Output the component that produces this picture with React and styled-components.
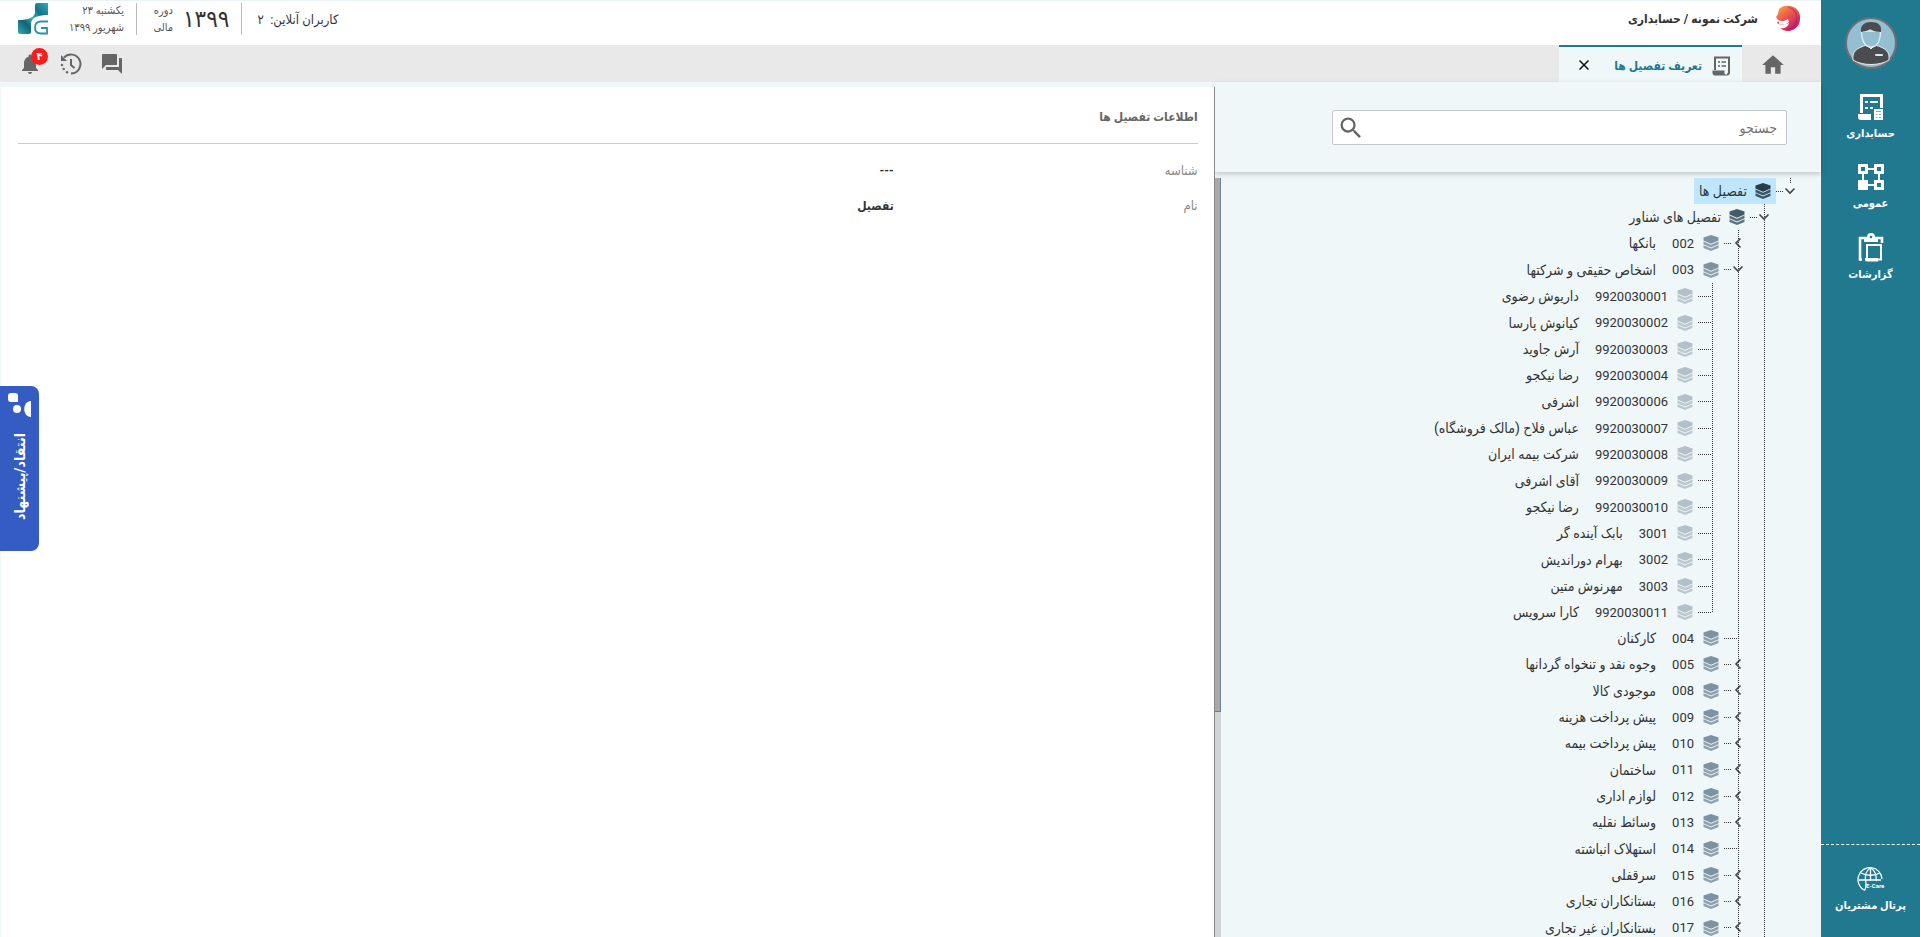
import React, { useState } from 'react'
import styled, { createGlobalStyle, css } from 'styled-components'
import { MdHome, MdForum, MdNotifications, MdSearch } from 'react-icons/md'

const teal = '#217990'
const pale = '#f0f7f9'

const GlobalStyle = createGlobalStyle`
* {
  box-sizing: border-box;
}
body {
  margin: 0;
  background: ${pale};
  color: #333;
  font-family: Roboto, "DejaVu Sans Condensed", "DejaVu Sans", sans-serif;
  font-size: 13px;
}
button, input {
  font: inherit;
  color: inherit;
}
button {
  padding: 0;
  border: 0;
  background: none;
  cursor: pointer;
}
`

const Page = styled.div`
direction: rtl;
display: flex;
height: 100vh;
overflow: hidden;
`

const Sidebar = styled.nav`
flex: 0 0 99px;
display: flex;
flex-direction: column;
align-items: center;
padding-top: 17px;
background: ${teal};
color: white;
`

const Avatar = styled.button`
height: 52px;
margin-bottom: 24px;
`

const SideLink = styled.a`
display: flex;
flex-direction: column;
align-items: center;
gap: 3px;
height: 70px;
color: white;
font-size: 11px;
font-weight: bold;
line-height: 20px;
text-decoration: none;
white-space: nowrap;
`

const Portal = styled.div`
align-self: stretch;
margin-top: auto;
padding-top: 22px;
border-top: 1px dashed white;
`

const Main = styled.div`
flex: 1;
min-width: 0;
display: flex;
flex-direction: column;
`

const Header = styled.header`
display: flex;
justify-content: space-between;
height: 45px;
border-top: 1px solid #eaf4f6;
background: white;
`

const HeaderGroup = styled.div`
display: flex;
align-items: center;
padding: 0 20px 8px 18px;
`

const Company = styled.h1`
margin: 0 18px 0 0;
font-size: 12px;
font-weight: bold;
`

const OnlineUsers = styled.span`
padding-left: 15px;
`

const Separated = styled.div`
display: flex;
align-items: center;
gap: 10px;
height: 32px;
padding: 0 12px 0 14px;
border-right: 1px solid #bbb;
`

const Year = styled.span`
font-size: 24px;
line-height: 32px;
`

const Small = styled.span`
width: ${props => props.$width};
color: #555;
font-size: 11px;
line-height: 17px;
`

const TabBar = styled.div`
display: flex;
justify-content: space-between;
height: 37px;
padding-left: 18px;
background: #e9e9e9;
color: #666;
`

const Tabs = styled.div`
display: flex;
align-items: stretch;
`

const HomeTab = styled.button`
width: 79px;
padding: 2px 0 0 18px;
color: #666;
display: flex;
align-items: center;
justify-content: flex-end;
`

const Tab = styled.div`
display: flex;
align-items: center;
width: 183px;
padding: 2px 11px 0;
border-top: 2px solid ${teal};
background: ${pale};
`

const TabTitle = styled.a`
flex: 1;
display: flex;
align-items: center;
gap: 10px;
color: ${teal};
font-size: 12px;
font-weight: bold;
text-decoration: none;
white-space: nowrap;
`

const CloseButton = styled.button`
width: 28px;
height: 28px;
`

const Tools = styled.div`
display: flex;
align-items: center;
gap: 18px;
`

const ToolButton = styled.button`
position: relative;
display: flex;
color: #666;
`

const Badge = styled.span`
position: absolute;
top: -4px;
left: 13px;
width: 17px;
height: 17px;
border-radius: 50%;
background: #f91c1c;
color: white;
font-size: 11px;
font-weight: bold;
line-height: 17px;
text-align: center;
`

const Content = styled.main`
flex: 1;
min-height: 0;
display: flex;
`

const TreePanel = styled.section`
flex: 0 0 33.3%;
min-width: 0;
display: flex;
flex-direction: column;
`

const SearchArea = styled.form`
padding: 28px 34px 27px 117px;
box-shadow: 0 2px 5px rgba(0, 0, 0, .2);
`

const SearchBox = styled.div`
display: flex;
align-items: center;
height: 35px;
border: 1px solid #c4c8ca;
border-radius: 2px;
background: white;
color: #666;
`

const SearchInput = styled.input`
flex: 1;
min-width: 0;
height: 100%;
padding: 0 9px;
border: 0;
outline: 0;
background: none;
font-size: 14px;
::placeholder {
  color: #777;
}
`

const SearchButton = styled.button`
display: flex;
margin-left: 4px;
`

const TreeScroll = styled.div`
flex: 1;
min-height: 0;
display: flex;
margin-top: 6px;
overflow: hidden;
`

const Track = styled.div`
flex: 0 0 6px;
background: #cfd4d6;
`

const Thumb = styled.div`
height: 70.4%;
border-right: 1px solid #6f8195;
border-bottom: 1px solid #6f8195;
background: #a9a9a9;
`

const dots = direction => css`repeating-linear-gradient(${direction}, #333 0 1px, transparent 1px 2px)`

const Branch = styled.ul`
margin: 0 26px 0 0;
padding: 0;
list-style: none;
background: ${dots('to bottom')} right top / 1px calc(100% - 12px) no-repeat;
`

const RootBranch = styled(Branch)`
flex: 1;
margin-right: 30px;
background-size: 1px 6px;
`

const Node = styled.li`
&:nth-child(3n + 2) > div {
  height: 27px;
}
`

const Row = styled.div`
position: relative;
display: flex;
align-items: center;
height: 26px;
`

const Stub = styled.span`
flex: none;
width: 15px;
height: 1px;
background: ${dots('to right')} left top / ${props => (props.$short ? '8px' : '14px')} 1px no-repeat;
`

const Toggle = styled.button`
position: absolute;
top: 7px;
right: -5px;
width: 12px;
height: 12px;
display: flex;
`

const Label = styled.button`
display: flex;
align-items: center;
height: 100%;
padding: 0 5px;
background: ${props => (props.$selected ? '#bfe6ff' : 'none')};
white-space: nowrap;
`

const Code = styled.span`
margin-right: 9px;
margin-left: 8px;
`

const Name = styled.span`
margin-right: 8px;
font-size: 14px;
line-height: 20px;
`

const Details = styled.section`
flex: 1;
min-width: 0;
margin: 5px 0 0 1px;
padding: 18px 16px 16px 17px;
border-right: 1px solid #888;
background: white;
`

const DetailsTitle = styled.h2`
margin: 0 0 17px;
padding-bottom: 14px;
border-bottom: 1px solid #ccc;
color: #666;
font-size: 12px;
line-height: 24px;
`

const Fields = styled.dl`
display: grid;
grid-template-columns: 1fr 3fr;
gap: 15px 12px;
margin: 0;
line-height: 20px;
`

const FieldName = styled.dt`
color: #888;
`

const FieldValue = styled.dd`
margin: 0;
font-size: 12px;
font-weight: bold;
`

const Feedback = styled.button`
position: fixed;
top: 386px;
left: 0;
display: flex;
flex-direction: column;
align-items: center;
gap: 16px;
width: 39px;
height: 165px;
padding-top: 6px;
border-radius: 0 8px 8px 0;
background: #355cc2;
color: white;
font-size: 14px;
font-weight: bold;
`

const FeedbackText = styled.span`
writing-mode: vertical-rl;
transform: rotate(180deg);
white-space: nowrap;
`

const LayersIcon = ({ color }) => (
  <svg width="16" height="16" viewBox="0 0 16 16" fill={color}>
    <path d="M8 0l7.500 2.600v2.800L8 8.800.5 5.400V2.600z" />
    <path d="M.5 6.300L3 7.500 8 9.800l5-2.300 2.500-1.200v2.900l-1.500.8L8 12.600 2 10 .5 9.200z" opacity=".85" />
    <path d="M.5 10.300L3 11.300 8 13.500l5-2.200 2.500-1v2.600L8 16 .5 12.900z" opacity=".85" />
  </svg>
)

const Chevron = ({ open }) => (
  <svg width="12" height="12" viewBox="0 0 12 12" fill="none" stroke="#444" strokeWidth="1.600">
    <path d={open ? 'M1.500 3.500L6 8l4.500-4.500' : 'M8.500 1.500L4 6l4.500 4.500'} />
  </svg>
)

const ScrollIcon = () => (
  <svg width="19" height="20" viewBox="0 0 19 20" fill="none" stroke="#666" strokeWidth="2">
    <path d="M3 14V1.500h14V16c0 1.500-1 2.500-2 2.500" />
    <path d="M6 6h2M9.500 6H14M6 10h2M9.500 10H14" strokeWidth="1.600" />
    <path d="M.5 14.500h12V17c0 1 .8 1.500 2.500 1.500v1H3c-1.500 0-2.500-1-2.500-2.500z" fill="#666" stroke="none" />
  </svg>
)

const HistoryIcon = () => (
  <svg width="22" height="22" viewBox="0 0 22 22" fill="none" stroke="#666" strokeWidth="2">
    <path d="M4 4.500A9.500 9.500 0 1 1 11 20.500" />
    <path d="M1 2v6h6z" fill="#666" stroke="none" />
    <path d="M11 6v6l3.500 3" />
    <g fill="#666" stroke="none">
      <circle cx="2" cy="12" r="1.200" />
      <circle cx="3.700" cy="16" r="1.200" />
      <circle cx="7" cy="19.200" r="1.200" />
    </g>
  </svg>
)

const AccountingIcon = () => (
  <svg width="26" height="28" viewBox="0 0 26 28">
    <path d="M3.500 20V2.500h20V15" fill="none" stroke="white" strokeWidth="3" />
    <path d="M7 9h3M12 9h8M7 15h3M12 15h3" stroke="white" strokeWidth="2" />
    <path d="M0 21h13v6H3c-2 0-3-1-3-3z" fill="white" />
    <path d="M16 16h9v11h-9z" fill="white" />
    <path d="M18 18.500h5M18 21.500h1.500M21 21.500h2M18 24.500h1.500M21 24.500h2" stroke={teal} opacity=".6" />
  </svg>
)

const GeneralIcon = () => (
  <svg width="28" height="28" viewBox="0 0 28 28" fill="none" stroke="white" strokeWidth="3">
    <path d="M2.500 2.500h7v7h-7zM18.500 2.500h7v7h-7zM18.500 18.500h7v7h-7z" />
    <path d="M1 17h10v10H1z" fill="white" stroke="none" />
    <path d="M11 6h6M6 11v6M22 11v6M11 22h6" strokeWidth="2" />
  </svg>
)

const ReportsIcon = () => (
  <svg width="26" height="29" viewBox="0 0 26 29" fill="none" stroke="white">
    <path d="M4 26.500H2V5h22v5" strokeWidth="2.600" />
    <path d="M6 4h3a4 4 0 0 1 8 0h3v5H6z" fill="white" stroke="none" />
    <circle cx="13" cy="4" r="1.300" fill={teal} stroke="none" />
    <path d="M9 12h14v14.500H9z" strokeWidth="2" />
    <path d="M7 25h13v3.500H9c-1.500 0-2-1-2-2z" fill="white" stroke="none" />
  </svg>
)

const GlobeIcon = () => (
  <svg width="28" height="26" viewBox="0 0 28 26" fill="none" stroke="white" strokeWidth="1.300">
    <path d="M8 23.500A12 12 0 1 1 25 12" />
    <path d="M9 16C7 8 10 3 13.500 1M13.500 1v13M13.500 1C18 3 20 9 19 14M4 6c5 3 14 3 19 0M2 13h22M9 16c0 3 0 5-1 7" />
    <text x="9" y="21" direction="ltr" fill="white" stroke="none" fontSize="6" fontWeight="bold">E-Care</text>
  </svg>
)

const AvatarIcon = () => (
  <svg width="52" height="52" viewBox="0 0 52 52">
    <circle cx="26" cy="26" r="25" fill="#93bfd0" stroke="#6c6f73" strokeWidth="2" />
    <path d="M8 43c-1-8 3-12 14-15l4 4 4-4c11 3 15 7 14 15-9 6-27 6-36 0z" fill="#4b4c50" stroke="#e2eef2" />
    <path d="M16.500 14c0 9 3 16 9.500 16s9.500-7 9.500-16z" fill="#93bfd0" stroke="#e2eef2" strokeWidth="1.300" />
    <path d="M16 15c-1-7 4-10 10-10 7 0 11 3 10 10-5 0-8-1-11-3-2 2-6 2-9 3z" fill="#4b4c50" />
    <rect x="30" y="37" width="8" height="2" rx="1" fill="#dce9ed" />
  </svg>
)

const LionLogo = () => (
  <svg width="25" height="28" viewBox="0 0 25 28">
    <defs>
      <linearGradient id="lion" x1="0" y1="0" x2=".7" y2="1">
        <stop offset="0" stopColor="#fbb040" />
        <stop offset=".45" stopColor="#ef5b4c" />
        <stop offset="1" stopColor="#c4186c" />
      </linearGradient>
    </defs>
    <path d="M3 4C6 1 10 0 14 1c7 1 11 7 10 14-1 8-8 13-17 10l-3-2c4 1 8-1 9-5l-5 2-6-1-1-2 4-1-3-1-2-3 2-3z" fill="url(#lion)" />
    <path d="M12 2c7 2 10 8 8 14-1 5-5 8-9 9" fill="none" stroke="#9e1560" strokeWidth="1.500" opacity=".4" />
    <path d="M3 16h5l4-2 1 3-4 3-6-1z" fill="white" />
  </svg>
)

const BrandLogo = () => (
  <svg width="30" height="32" viewBox="0 0 30 32">
    <defs>
      <linearGradient id="brand" x1="0" y1="1" x2="1" y2="0">
        <stop offset="0" stopColor="#37a9b8" />
        <stop offset=".3" stopColor="#0e6475" />
        <stop offset=".5" stopColor="#37b4c4" />
        <stop offset=".7" stopColor="#11738a" />
        <stop offset="1" stopColor="#37a9b8" />
      </linearGradient>
    </defs>
    <path d="M19 0h11v12c-9 0-16 2-17 8v9c0 1-1 2-2 2H2c-1 0-2-1-2-2V17c8 0 15-1 17-7V2c0-1 1-2 2-2z" fill="url(#brand)" />
    <path d="M30 18.500h-7c-4 0-6 2-6 6s2 6 6 6h6V25h-6" fill="none" stroke="#2793a6" strokeWidth="1.800" />
  </svg>
)

const FeedbackIcon = () => (
  <svg width="24" height="25" viewBox="0 0 24 25" fill="white">
    <path d="M3 1h4c2 0 3 1 3 3v6H3c-2 0-3-1-3-3V4c0-2 1-3 3-3z" />
    <circle cx="9" cy="17" r="4" />
    <path d="M23 9v16c-9 0-9-16 0-16z" />
  </svg>
)

const people = [
  ['9920030001', 'داریوش رضوی'],
  ['9920030002', 'کیانوش پارسا'],
  ['9920030003', 'آرش جاوید'],
  ['9920030004', 'رضا نیکجو'],
  ['9920030006', 'اشرفی'],
  ['9920030007', 'عباس فلاح (مالک فروشگاه)'],
  ['9920030008', 'شرکت بیمه ایران'],
  ['9920030009', 'آقای اشرفی'],
  ['9920030010', 'رضا نیکجو'],
  ['3001', 'بابک آینده گر'],
  ['3002', 'بهرام دوراندیش'],
  ['3003', 'مهرنوش متین'],
  ['9920030011', 'کارا سرویس']
].map(([code, name]) => ({ code, name }))

const groups = [
  { code: '002', name: 'بانکها', children: [] },
  { code: '003', name: 'اشخاص حقیقی و شرکتها', open: true, children: people },
  { code: '004', name: 'کارکنان' },
  { code: '005', name: 'وجوه نقد و تنخواه گردانها', children: [] },
  { code: '008', name: 'موجودی کالا', children: [] },
  { code: '009', name: 'پیش پرداخت هزینه', children: [] },
  { code: '010', name: 'پیش پرداخت بیمه', children: [] },
  { code: '011', name: 'ساختمان', children: [] },
  { code: '012', name: 'لوازم اداری', children: [] },
  { code: '013', name: 'وسائط نقلیه', children: [] },
  { code: '014', name: 'استهلاک انباشته' },
  { code: '015', name: 'سرقفلی', children: [] },
  { code: '016', name: 'بستانکاران تجاری', children: [] },
  { code: '017', name: 'بستانکاران غیر تجاری', children: [] }
]

const tree = {
  name: 'تفصیل ها',
  open: true,
  children: [
    { name: 'تفصیل های شناور', open: true, children: groups }
  ]
}

const iconColors = ['#263c48', '#435c6a', '#7b93a2', '#b3c0c9']

const TreeNode = ({ node, level, selected, onSelect }) => {
  const [open, setOpen] = useState(Boolean(node.open))
  const hasChildren = Boolean(node.children)
  return (
    <Node>
      <Row>
        <Stub $short={hasChildren} />
        {hasChildren && (
          <Toggle aria-label={node.name} aria-expanded={open} onClick={() => setOpen(!open)}>
            <Chevron open={open} />
          </Toggle>
        )}
        <Label $selected={selected === node} onClick={() => onSelect(node)}>
          <LayersIcon color={iconColors[level]} />
          {node.code && <Code>{node.code}</Code>}
          <Name>{node.name}</Name>
        </Label>
      </Row>
      {open && hasChildren && (
        <Branch as={level < 2 ? OpenBranch : undefined}>
          {node.children.map(child => (
            <TreeNode
              key={child.code || child.name}
              node={child}
              level={level + 1}
              selected={selected}
              onSelect={onSelect}
            />
          ))}
        </Branch>
      )}
    </Node>
  )
}

// outer branches keep their guide line running past the last loaded row
const OpenBranch = styled(Branch)`
background-size: 1px 100%;
`

export default function App() {
  const [selected, setSelected] = useState(tree)
  return (
    <Page>
      <GlobalStyle />
      <Sidebar>
        <Avatar aria-label="کاربر"><AvatarIcon /></Avatar>
        <SideLink href="#accounting"><AccountingIcon />حسابداری</SideLink>
        <SideLink href="#general"><GeneralIcon />عمومی</SideLink>
        <SideLink href="#reports"><ReportsIcon />گزارشات</SideLink>
        <Portal>
          <SideLink href="#portal"><GlobeIcon />پرتال مشتریان</SideLink>
        </Portal>
      </Sidebar>
      <Main>
        <Header>
          <HeaderGroup>
            <LionLogo />
            <Company>شرکت نمونه / حسابداری</Company>
          </HeaderGroup>
          <HeaderGroup>
            <OnlineUsers>کاربران آنلاین: &nbsp;۲</OnlineUsers>
            <Separated>
              <Year>۱۳۹۹</Year>
              <Small $width="22px">دوره مالی</Small>
            </Separated>
            <Separated>
              <Small $width="62px">یکشنبه ۲۳ شهریور ۱۳۹۹</Small>
            </Separated>
            <BrandLogo />
          </HeaderGroup>
        </Header>
        <TabBar>
          <Tabs>
            <HomeTab aria-label="خانه"><MdHome size={26} /></HomeTab>
            <Tab>
              <TabTitle href="#details"><ScrollIcon />تعریف تفصیل ها</TabTitle>
              <CloseButton aria-label="بستن">
                <svg width="10" height="10" viewBox="0 0 10 10" stroke="#111" strokeWidth="1.500">
                  <path d="M.5.5l9 9M9.500.5l-9 9" />
                </svg>
              </CloseButton>
            </Tab>
          </Tabs>
          <Tools>
            <ToolButton aria-label="پیام ها"><MdForum size={24} /></ToolButton>
            <ToolButton aria-label="تاریخچه"><HistoryIcon /></ToolButton>
            <ToolButton aria-label="اعلان ها">
              <MdNotifications size={24} />
              <Badge>۴</Badge>
            </ToolButton>
          </Tools>
        </TabBar>
        <Content>
          <TreePanel>
            <SearchArea onSubmit={e => e.preventDefault()}>
              <SearchBox>
                <SearchInput aria-label="جستجو" placeholder="جستجو" />
                <SearchButton aria-label="جستجو"><MdSearch size={28} /></SearchButton>
              </SearchBox>
            </SearchArea>
            <TreeScroll>
              <RootBranch>
                <TreeNode node={tree} level={0} selected={selected} onSelect={setSelected} />
              </RootBranch>
              <Track><Thumb /></Track>
            </TreeScroll>
          </TreePanel>
          <Details>
            <DetailsTitle>اطلاعات تفصیل ها</DetailsTitle>
            <Fields>
              <FieldName>شناسه</FieldName>
              <FieldValue>---</FieldValue>
              <FieldName>نام</FieldName>
              <FieldValue>تفصیل</FieldValue>
            </Fields>
          </Details>
        </Content>
      </Main>
      <Feedback>
        <FeedbackIcon />
        <FeedbackText>انتقاد/پیشنهاد</FeedbackText>
      </Feedback>
    </Page>
  )
}
